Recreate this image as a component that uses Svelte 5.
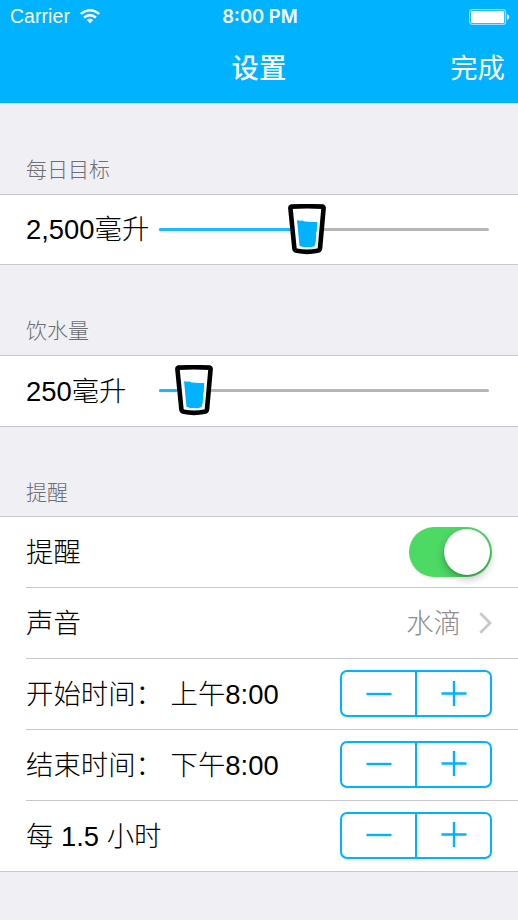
<script lang="ts">
    type Slider = { title: string; value: number; min: number; max: number };

    const sliders: Slider[] = [
        { title: '每日目标', value: 2500, min: 500, max: 5020 },
        { title: '饮水量', value: 250, min: 100, max: 2900 },
    ];

    let reminder = true;
    let startHour = 8;
    let endHour = 20;
    let interval = 1.5;

    function formatHour(hour: number) {
        return (hour < 12 ? '上午' : '下午') + (hour % 12 || 12) + ':00';
    }

    function fraction(s: Slider) {
        return (s.value - s.min) / (s.max - s.min);
    }

    $: steppers = [
        { label: '开始时间： ' + formatHour(startHour), step: (d: number) => (startHour = (startHour + d + 24) % 24) },
        { label: '结束时间： ' + formatHour(endHour), step: (d: number) => (endHour = (endHour + d + 24) % 24) },
        { label: `每 ${interval} 小时`, step: (d: number) => (interval = Math.max(0.5, interval + d / 2)) },
    ];
</script>

<div class="screen">
    <header>
        <div class="status">
            <div class="carrier">
                <span>Carrier</span>
                <svg width="20" height="15" viewBox="0 0 20 15" fill="none" stroke="#fff" stroke-width="2.5">
                    <path d="M0.8 4.9Q10 -2.5 19.2 4.9" />
                    <path d="M4.1 8.5Q10 3.7 15.9 8.5" />
                    <path d="M6.8 11.1Q10 8.1 13.2 11.1L10 14.2Z" fill="#fff" stroke="none" />
                </svg>
            </div>
            <div class="clock">8:00 PM</div>
            <svg class="battery" width="41" height="16" viewBox="0 0 41 16">
                <rect x="0.6" y="0.6" width="36" height="14.8" rx="2.6" fill="none" stroke="#fff" stroke-opacity="0.6" stroke-width="1.2" />
                <rect x="2" y="2" width="33.2" height="12" rx="1.2" fill="#fff" />
                <path d="M38.2 5Q40.2 6 40.2 8Q40.2 10 38.2 11Z" fill="#fff" />
            </svg>
        </div>
        <div class="navbar">
            <h1>设置</h1>
            <button class="done">完成</button>
        </div>
    </header>

    {#each sliders as s}
        <section>
            <h2>{s.title}</h2>
            <div class="group">
                <div class="row">
                    <span class="label amount">{s.value.toLocaleString('en-US')}毫升</span>
                    <div class="slider">
                        <div class="filled" style="width: {fraction(s) * 100}%"></div>
                        <svg class="glass" style="left: calc({fraction(s)} * (100% - 38px))" width="38" height="51" viewBox="0 0 38 51">
                            <path d="M3 2.6Q19 1.9 35 2.6Q35.7 2.8 35.6 4L32 44.5Q31.8 46.3 29.5 46.8Q19 48.9 8.8 46.8Q6.6 46.3 6.4 44.5L2.4 4Q2.3 2.8 3 2.6Z" fill="#fff" stroke="#000" stroke-width="4.6" stroke-linejoin="round" />
                            <path d="M9 16.2L13 16.8L13.2 16.2L17 17.4L24 18.1L29.2 18L28.8 27L28.2 28L27.8 38L27 39.5L26.7 42L23 43.2L15 43L11.5 41.8L10.6 33L10.1 27L9.6 22Z" fill="#00b2ff" />
                        </svg>
                    </div>
                </div>
            </div>
        </section>
    {/each}

    <section>
        <h2>提醒</h2>
        <div class="group">
            <div class="row">
                <span class="label">提醒</span>
                <button class="switch" class:on={reminder} on:click={() => (reminder = !reminder)} aria-label="提醒">
                    <span class="knob"></span>
                </button>
            </div>
            <div class="row">
                <span class="label">声音</span>
                <div class="detail">
                    <span class="label">水滴</span>
                    <svg width="13" height="22" viewBox="0 0 13 22" fill="none" stroke="#c7c7cc" stroke-width="2.8">
                        <path d="M1.3 1.3L11 11L1.3 20.7" />
                    </svg>
                </div>
            </div>
            {#each steppers as item}
                <div class="row">
                    <span class="label">{item.label}</span>
                    <div class="stepper">
                        <button on:click={() => item.step(-1)} aria-label="−">
                            <svg width="26" height="26" viewBox="0 0 26 26"><path d="M0.5 13H25.5" /></svg>
                        </button>
                        <button on:click={() => item.step(1)} aria-label="+">
                            <svg width="26" height="26" viewBox="0 0 26 26"><path d="M0.5 12.5H25.5M13 0V25" /></svg>
                        </button>
                    </div>
                </div>
            {/each}
        </div>
    </section>
</div>

<style>
    :global(body) {
        background: #efeff4;
    }

    .screen {
        min-height: 920px;
        background: #efeff4;
        color: #000;
        font-family: 'Liberation Sans', 'Noto Sans CJK SC', sans-serif;
        font-size: 27.4px;
        font-weight: 300;
        line-height: 40px;
        overflow: hidden;
    }

    button {
        padding: 0;
        border: none;
        background: none;
        color: inherit;
        font: inherit;
        cursor: pointer;
    }

    svg {
        display: block;
    }

    header {
        height: 103px;
        background: #00b2ff;
        border-bottom: 1px solid #e4f2fb;
        color: #fff;
    }

    .status {
        display: grid;
        grid-template-columns: 1fr auto 1fr;
        align-items: center;
        height: 33px;
        padding: 0 8px 0 10px;
        font-size: 19.4px;
        line-height: 33px;
    }

    .carrier {
        display: flex;
        align-items: center;
        gap: 10px;
        letter-spacing: 0.1px;
    }

    .clock {
        font-family: Inter, 'Liberation Sans', sans-serif;
        font-size: 18.4px;
        font-weight: 600;
    }

    .battery {
        justify-self: end;
    }

    .navbar {
        display: grid;
        grid-template-columns: 1fr auto 1fr;
        align-items: center;
        height: 72px;
    }

    h1 {
        grid-column: 2;
        margin: 0;
        font-size: 27.4px;
        font-weight: 500;
    }

    .done {
        justify-self: end;
        margin-right: 13px;
        font-weight: 400;
    }

    section h2 {
        box-sizing: border-box;
        height: 89.5px;
        margin: 0;
        padding: 50px 0 0 26px;
        color: #6d6d72;
        font-size: 21px;
        font-weight: 300;
        line-height: 32px;
    }

    .group {
        background: #fff;
        border-top: 1px solid #c8c7cc;
        border-bottom: 1px solid #c8c7cc;
    }

    .row {
        display: flex;
        align-items: center;
        justify-content: space-between;
        height: 69.9px;
        margin-left: 26px;
        padding-right: 26px;
        white-space: pre;
    }

    .row + .row {
        border-top: 1px solid #c8c7cc;
    }

    .label {
        padding-top: 2px;
    }

    .amount {
        width: 133px;
    }

    .slider {
        position: relative;
        flex: 1;
        height: 3px;
        margin-right: 3px;
        border-radius: 2px;
        background: #b6b6b6;
    }

    .filled {
        height: 3px;
        border-radius: 2px;
        background: #1db9fd;
    }

    .glass {
        position: absolute;
        top: -24px;
    }

    .switch {
        display: flex;
        justify-content: flex-start;
        box-sizing: border-box;
        width: 83px;
        height: 50px;
        margin-bottom: 1px;
        padding: 2px;
        border-radius: 25px;
        background: #e5e5ea;
    }

    .switch.on {
        justify-content: flex-end;
        background: #4cd964;
    }

    .knob {
        width: 46px;
        height: 46px;
        border-radius: 50%;
        background: #fff;
        box-shadow: 0 4px 8px rgba(0, 0, 0, 0.25), 0 1px 2px rgba(0, 0, 0, 0.2);
    }

    .detail {
        display: flex;
        align-items: center;
        gap: 18px;
        color: #8e8e93;
    }

    .stepper {
        display: flex;
        box-sizing: border-box;
        width: 152px;
        height: 47px;
        margin-bottom: 1px;
        border: 2px solid #00b2ff;
        border-radius: 7px;
    }

    .stepper button {
        display: flex;
        flex: 1;
        align-items: center;
        justify-content: center;
    }

    .stepper button + button {
        border-left: 2px solid #00b2ff;
    }

    .stepper path {
        stroke: #00b2ff;
        stroke-width: 2.4;
    }
</style>
